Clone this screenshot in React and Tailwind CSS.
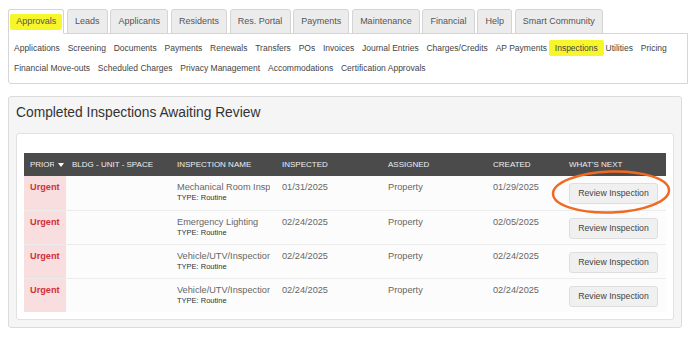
import React from 'react';

const tabs = ['Approvals', 'Leads', 'Applicants', 'Residents', 'Res. Portal', 'Payments', 'Maintenance', 'Financial', 'Help', 'Smart Community'];

const subLinks = [
  'Applications', 'Screening', 'Documents', 'Payments', 'Renewals', 'Transfers', 'POs', 'Invoices',
  'Journal Entries', 'Charges/Credits', 'AP Payments', 'Inspections', 'Utilities', 'Pricing',
  'Financial Move-outs', 'Scheduled Charges', 'Privacy Management', 'Accommodations', 'Certification Approvals',
];

const rows = [
  { name: 'Mechanical Room Inspection', inspected: '01/31/2025', created: '01/29/2025' },
  { name: 'Emergency Lighting', inspected: '02/24/2025', created: '02/05/2025' },
  { name: 'Vehicle/UTV/Inspection', inspected: '02/24/2025', created: '02/24/2025' },
  { name: 'Vehicle/UTV/Inspection', inspected: '02/24/2025', created: '02/24/2025' },
];

const cols = 'grid grid-cols-[42px_105px_105px_106px_105px_76px_103px]';

export default function App() {
  return (
    <div className="relative w-[688px] h-[340px] overflow-hidden bg-white font-['Liberation_Sans',Arial,sans-serif]">
      <div className="pt-[9px] pl-[8px]">
        {/* top tabs */}
        <div className="relative z-10 flex gap-[2.5px] -mb-px">
          {tabs.map((t, i) => (
            <div
              key={t}
              className={
                'relative h-[25px] px-[7.2px] flex items-center text-[9px] text-[#555] border border-[#d4d4d4] rounded-t-[3px] ' +
                (i === 0 ? 'bg-white border-b-white' : 'bg-[#ececec]')
              }
            >
              {i === 0 && <span className="absolute left-[1px] right-[1px] top-[4px] bottom-[3px] bg-[#f6f62b] rounded-[2px]" />}
              <span className="relative">{t}</span>
            </div>
          ))}
        </div>

        {/* sub navigation */}
        <div className="border border-[#d6d6d6] rounded-bl-[3px] pt-[4px] pb-[5px] px-[5px] flex flex-wrap gap-x-[7.8px] text-[8.5px] leading-[20px] text-[#444]">
          {subLinks.map(l => (
            <span key={l} className="relative whitespace-nowrap">
              {l === 'Inspections' && (
                <span className="absolute -left-[6px] -right-[6px] top-[2px] bottom-[2px] bg-[#f6f62b] rounded-[2px]" />
              )}
              <span className="relative">{l}</span>
            </span>
          ))}
        </div>
      </div>

      {/* main panel */}
      <div className="ml-[8px] mt-[12px] w-[674px] bg-[#f5f5f5] border border-[#dcdcdc] rounded-[3px] p-[7px]">
        <h1 className="h-[18px] leading-[18px] text-[13.8px] text-[#333] mb-[11px]">Completed Inspections Awaiting Review</h1>

        <div className="bg-white border border-[#e2e2e2] rounded-[3px] px-[7px] pt-[19px] pb-[7px]">
          <div className={cols + ' h-[23px] bg-[#4b4b4b] text-[8px] text-[#eeeeee] items-center'}>
            <div className="pl-[6px] flex items-center">
              <span className="w-[24px] overflow-hidden whitespace-nowrap">PRIOR</span>
              <span className="ml-[4px] w-0 h-0 border-l-[3px] border-r-[3px] border-t-[4px] border-l-transparent border-r-transparent border-t-white" />
            </div>
            <div className="pl-[6px]">BLDG - UNIT - SPACE</div>
            <div className="pl-[6px]">INSPECTION NAME</div>
            <div className="pl-[6px]">INSPECTED</div>
            <div className="pl-[6px]">ASSIGNED</div>
            <div className="pl-[6px]">CREATED</div>
            <div className="pl-[6px]">WHAT'S NEXT</div>
          </div>

          {rows.map((r, i) => (
            <div key={i} className={cols + ' h-[34px] bg-[#fcfcfc] text-[9.2px] text-[#666] ' + (i > 0 ? 'border-t border-[#ececec]' : '')}>
              <div className="bg-[#f8dedf] pl-[6px] pt-[5px] leading-[12px] font-bold text-[#d0323a]">Urgent</div>
              <div />
              <div className="pl-[6px] pr-[6px] pt-[5px] overflow-hidden">
                <div className="leading-[12px] whitespace-nowrap overflow-hidden">{r.name}</div>
                <div className="leading-[10px] text-[7.5px] text-[#333]">TYPE: Routine</div>
              </div>
              <div className="pl-[6px] pt-[5px] leading-[12px]">{r.inspected}</div>
              <div className="pl-[6px] pt-[5px] leading-[12px]">Property</div>
              <div className="pl-[6px] pt-[5px] leading-[12px]">{r.created}</div>
              <div className="pl-[6px] pt-[7px]">
                <button className="w-[89px] h-[21px] bg-[#f0f0f0] border border-[#dedede] rounded-[3px] text-[8.7px] text-[#444]">
                  Review Inspection
                </button>
              </div>
            </div>
          ))}
        </div>
      </div>

      {/* annotation circle */}
      <svg className="absolute left-[548px] top-[166px]" width="126" height="52" viewBox="0 0 126 52">
        <ellipse cx="63" cy="26" rx="58" ry="20.5" fill="none" stroke="#ef6a22" strokeWidth="2.5" transform="rotate(-2 63 26)" />
      </svg>
    </div>
  );
}
